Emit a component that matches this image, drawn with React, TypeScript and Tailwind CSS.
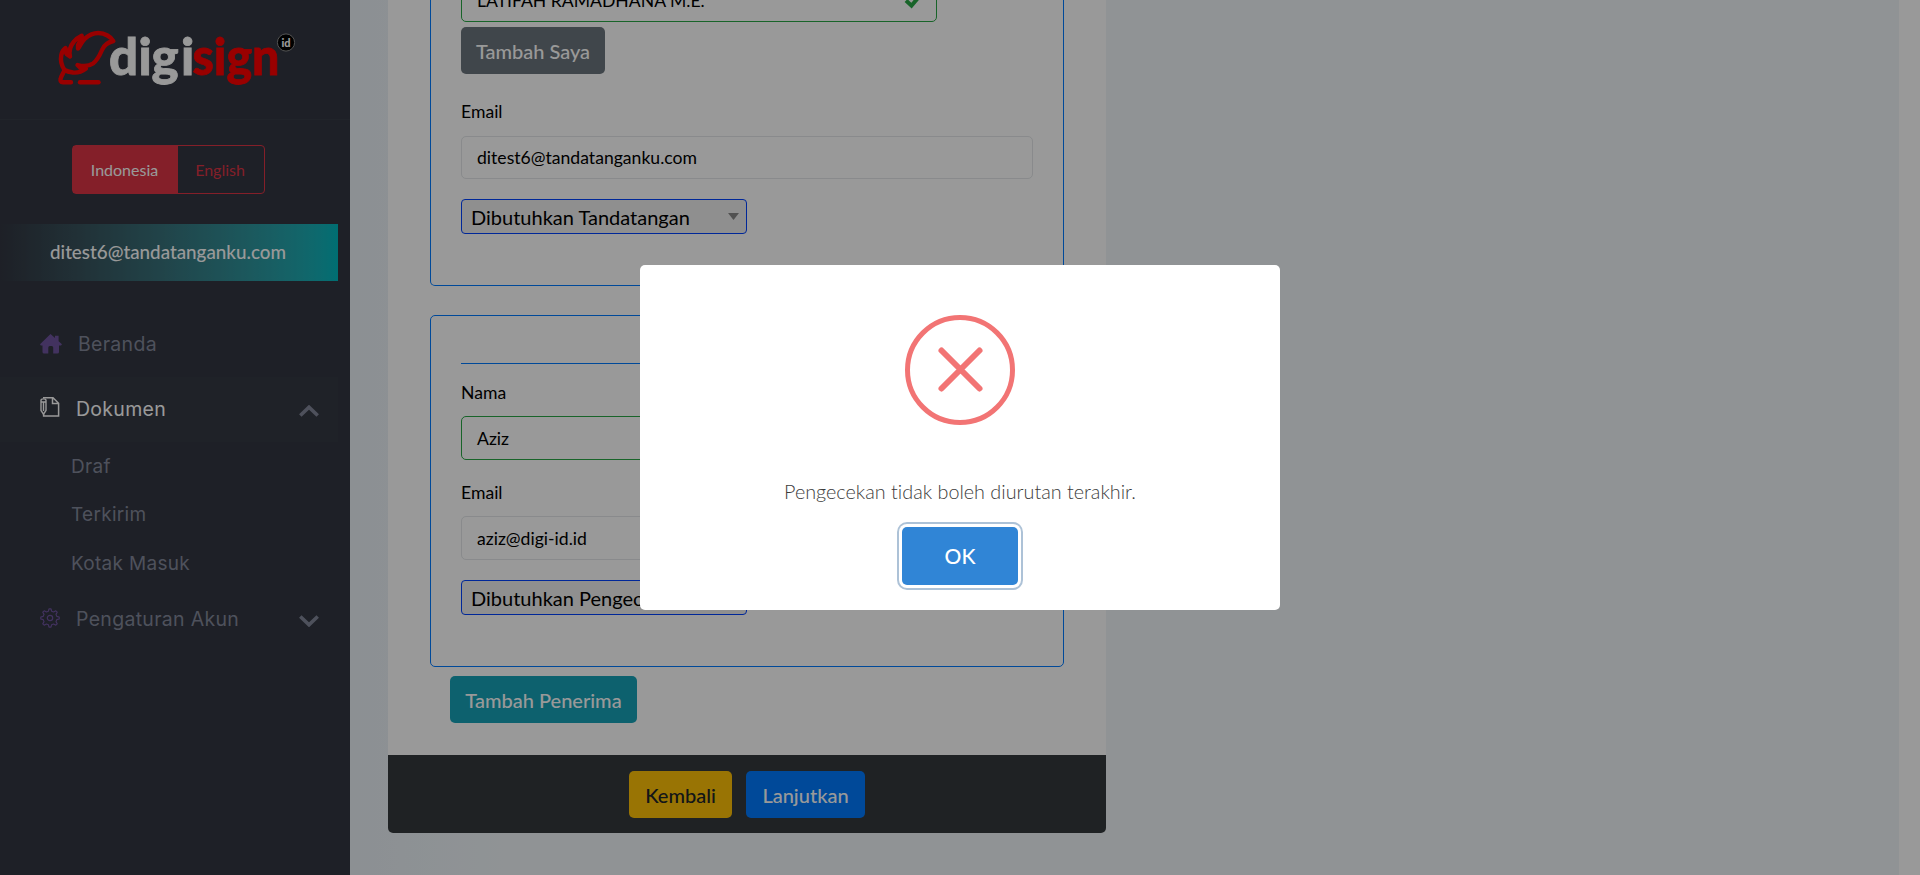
import React from 'react';

const lato = "font-['Lato','Liberation_Sans',sans-serif] [font-variant-ligatures:none]";

function Logo() {
  return (
    <svg width="240" height="60" viewBox="57 29 240 60" className="block overflow-visible" aria-label="digisign">
      <g fill="none" stroke="#ff0000" strokeWidth="4.4" strokeLinecap="round" strokeLinejoin="round">
        <path d="M71 82.3H63C60.5 82.3 60.3 80.5 60.6 79C61.2 75.5 63 74 64.5 70C61.5 65.5 60.3 60 61.3 55C62 51.5 63.5 49.5 65.5 48L66.5 54L70 56.5C68.5 50 71 45 74 41.5C76 39 79 37 81.7 35.7L80.5 40.5L78 45V48.5C81 45 81.5 41.5 85 38.5C89 35 94 33 98.3 33C105 33 111 37 113.3 41C107 42.5 104 45 102 50C99 57 97 60.5 93 63.5C89 66.3 83 66.5 77.5 65L80 67.5L86 68.5C82 71.5 78 73 73 72.5C69.5 72 67 71.5 64.5 70" />
        <path d="M80 82.3H98.5" />
      </g>
      <g fontFamily="Lato, sans-serif" fontWeight="900" fontSize="51" strokeWidth="0.8">
        <text x="109 138.5 151.5 181" y="75" fill="#ffffff" stroke="#ffffff">digi</text>
        <g fill="#ff0000" stroke="#ff0000">
          <text x="192.5" y="75" textLength="87" lengthAdjust="spacingAndGlyphs">sign</text>
        </g>
      </g>
      <circle cx="286" cy="42.5" r="8.6" fill="#000000" stroke="#8a8a8a" strokeWidth="1" />
      <text x="286" y="46.5" textAnchor="middle" fontFamily="Lato, sans-serif" fontWeight="900" fontSize="11" fill="#ffffff">id</text>
    </svg>
  );
}

function Chevron({ up = false }: { up?: boolean }) {
  return (
    <svg width="20" height="12" viewBox="0 0 20 12" fill="none" stroke="#83889a" strokeWidth="3.6" className="ml-auto mt-[2px]">
      <path d={up ? 'M1.3 10.5L10 2.2L18.7 10.5' : 'M1.3 1.5L10 9.8L18.7 1.5'} />
    </svg>
  );
}

function HomeIcon() {
  return (
    <svg width="22" height="20" viewBox="0 0 22 20" fill="#6f549f" className="-mt-[2px]">
      <path d="M10.5 0L15 4V1.8H18.6V7.2L22 10.2L21 11.4H19V18Q19 19.6 17.4 19.6H13.2V13.5Q13.2 12 11.7 12H9.8Q8.3 12 8.3 13.5V19.6H4.1Q2.5 19.6 2.5 18V11.4H.8L0 10.2Z" />
    </svg>
  );
}

function PenDocIcon() {
  return (
    <svg width="20" height="20" viewBox="0 0 20 20" fill="none" stroke="#ffffff" strokeWidth="1.5" className="-mt-[5px]">
      <path d="M3 .8H13L18.6 6.2V19H3.6V17M12.5 1V6.5H18.5" />
      <path d="M1 3.2C1 1.4 6 1.4 6 3.2V13.5L3.5 17.2L1 13.5ZM1 5H6M3.5 5V14" strokeWidth="1.4" />
    </svg>
  );
}

function GearIcon() {
  return (
    <svg width="20" height="20" viewBox="0 0 20 20" fill="none" stroke="#6f549f" strokeWidth="1.2" strokeLinejoin="round" className="-mt-[4px]">
      <path d="M8.4 3.2L9 .8H11L11.6 3.2L13.6 4L15.8 2.8L17.2 4.2L16 6.4L16.8 8.4L19.2 9V11L16.8 11.6L16 13.6L17.2 15.8L15.8 17.2L13.6 16L11.6 16.8L11 19.2H9L8.4 16.8L6.4 16L4.2 17.2L2.8 15.8L4 13.6L3.2 11.6L.8 11V9L3.2 8.4L4 6.4L2.8 4.2L4.2 2.8L6.4 4Z" />
      <circle cx="10" cy="10" r="2.7" />
    </svg>
  );
}

const navText = "font-['Inter','Liberation_Sans',sans-serif] text-[19.5px] leading-none tracking-[0.3px]";

function Sidebar() {
  return (
    <aside className="flex h-full w-[350px] shrink-0 flex-col bg-[#323641]">
      <div className="h-[120px] shrink-0 border-b border-[#383c46] pl-[57px] pt-[29px]">
        <Logo />
      </div>
      <div className="ml-[72px] mt-[25px] flex h-[49px] w-[193px] shrink-0 rounded-[4px] border border-[#dc3545] text-base">
        <span className="flex w-[105px] items-center justify-center bg-[#dc3545] pr-[2px] text-white">Indonesia</span>
        <span className="flex flex-1 items-center justify-center pr-[2px] text-[#dc3545]">English</span>
      </div>
      <div className="mt-[30px] flex h-[57px] w-[338px] shrink-0 items-center bg-linear-to-r from-[#323641] to-[#00b8bf] pl-[50px] text-[18.8px] font-medium text-white">
        ditest6@tandatanganku.com
      </div>
      <nav className={`${navText} flex w-[338px] flex-col text-[#83889a]`}>
        <div className="mt-[31px] flex h-[65px] items-center pl-[40px]">
          <HomeIcon />
          <span className="ml-[16px]">Beranda</span>
        </div>
        <div className="flex h-[65px] items-center bg-[#353943] pl-[40px] pr-[19px] text-white">
          <PenDocIcon />
          <span className="ml-[16px]">Dokumen</span>
          <Chevron up />
        </div>
        <div className="flex flex-col pl-[71px] text-[19px]">
          <span className="flex h-[48px] items-center">Draf</span>
          <span className="flex h-[49px] items-center">Terkirim</span>
          <span className="flex h-[49px] items-center">Kotak Masuk</span>
        </div>
        <div className="flex h-[64px] items-center pl-[40px] pr-[19px]">
          <GearIcon />
          <span className="ml-[16px]">Pengaturan Akun</span>
          <Chevron />
        </div>
      </nav>
    </aside>
  );
}

function RoleSelect({ label }: { label: string }) {
  return (
    <div className="flex h-[35px] w-[286px] items-center justify-between rounded-[4px] border border-[#0041ff] bg-[#efefef] pl-[9px] pr-[7px] text-[20px] leading-none">
      <span>{label}</span>
      <svg width="11" height="7" viewBox="0 0 11 7" fill="#888888">
        <path d="M0 0H11L5.5 7Z" />
      </svg>
    </div>
  );
}

function Recipients() {
  const input = 'flex items-center rounded-[5px] border pl-[15px]';
  return (
    <section className="ml-[38px] flex h-[833px] w-[718px] flex-col overflow-hidden rounded-b-[5px] bg-white text-[17.6px] leading-none text-black">
      <div className="ml-[42px] h-[286px] w-[634px] shrink-0 rounded-b-[5px] border border-t-0 border-[#007bff] px-[30px]">
        <div className={`${input} -mt-[22px] h-[44px] w-[476px] justify-between border-[#28a745] pr-[14px] pt-[2px]`}>
          <span>LATIFAH RAMADHANA M.E.</span>
          <svg width="18" height="16" viewBox="0 0 18 16" fill="none" stroke="#28a745" strokeWidth="4">
            <path d="M2 7.5L7.5 12.7L16 2.5" />
          </svg>
        </div>
        <div className="mt-[5px] flex h-[47px] w-[144px] items-center justify-center rounded-[5px] bg-[#6c757d] text-[20px] font-medium text-white">Tambah Saya</div>
        <div className="mt-[29px] h-[18px]">Email</div>
        <div className={`${input} mt-[15px] h-[43px] border-[#e4e7ea]`}>ditest6@tandatanganku.com</div>
        <div className="mt-[20px]"><RoleSelect label="Dibutuhkan Tandatangan" /></div>
      </div>
      <div className="ml-[42px] mt-[29px] h-[352px] w-[634px] shrink-0 rounded-[5px] border border-[#007bff] px-[30px]">
        <div className="mt-[47px] border-t border-[#007bff]" />
        <div className="mt-[20px] h-[18px]">Nama</div>
        <div className={`${input} mt-[14px] h-[44px] border-[#28a745] pt-[2px]`}>Aziz</div>
        <div className="mt-[24px] h-[18px]">Email</div>
        <div className={`${input} mt-[14px] h-[44px] border-[#e4e7ea] pt-[2px]`}>aziz@digi-id.id</div>
        <div className="mt-[20px]"><RoleSelect label="Dibutuhkan Pengecekan" /></div>
      </div>
      <div className="ml-[62px] mt-[9px] flex h-[47px] w-[187px] shrink-0 items-center justify-center rounded-[5px] bg-[#17a2b8] text-[20px] font-medium text-white">Tambah Penerima</div>
      <footer className="mt-auto flex h-[78px] shrink-0 justify-center gap-[14px] bg-[#343a3d] pt-[16px] text-[20px] font-medium">
        <span className="flex h-[47px] w-[103px] items-center justify-center rounded-[5px] bg-[#ffc107] text-[#212529]">Kembali</span>
        <span className="flex h-[47px] w-[119px] items-center justify-center rounded-[5px] bg-[#007bff] text-white">Lanjutkan</span>
      </footer>
    </section>
  );
}

function ErrorDialog() {
  return (
    <div className="absolute inset-0 flex items-center justify-center bg-black/40">
      <div role="dialog" className="flex h-[345px] w-[640px] flex-col items-center rounded-[5px] bg-white pt-[50px]">
        <svg width="110" height="110" viewBox="0 0 110 110" fill="none" stroke="#f27474" strokeWidth="5">
          <circle cx="55" cy="55" r="52.5" />
          <path d="M36.5 35.5L74.5 73.5M74.5 35.5L36.5 73.5" strokeLinecap="round" strokeWidth="6" />
        </svg>
        <p className="mt-[54px] h-[24px] text-[19.8px] font-light leading-[24px] text-[#3c3c3c]">Pengecekan tidak boleh diurutan terakhir.</p>
        <button className="mt-[24px] flex h-[58px] w-[116px] items-center justify-center rounded-[5px] bg-[#3085d6] text-[21px] font-medium text-white shadow-[0_0_0_3px_#ffffff,0_0_0_5px_#adc2d7]">OK</button>
      </div>
    </div>
  );
}

export default function App() {
  return (
    <div className={`${lato} relative flex h-[875px] w-[1920px] overflow-hidden bg-white`}>
      <Sidebar />
      <main className="flex flex-1 bg-linear-to-r from-[#e9f0f6] via-[#f0f6f9] via-10% to-[#f1f6f9]">
        <Recipients />
      </main>
      <div className="w-[21px] shrink-0 bg-white" />
      <ErrorDialog />
    </div>
  );
}
